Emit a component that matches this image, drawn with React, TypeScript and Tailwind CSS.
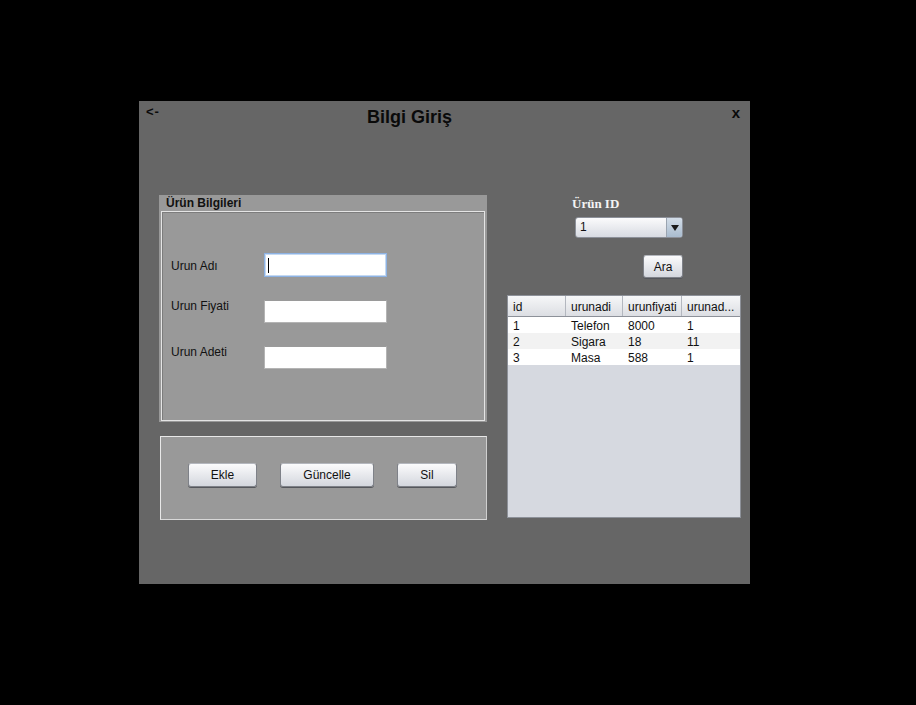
import React from 'react';

const sans = { fontFamily: '"Liberation Sans", Arial, sans-serif' };

function SwingButton({ label, w }: { label: string; w: string }) {
    return (
        <div
            className={`${w} h-[24px] rounded-[3px] border border-[#7e8188] border-t-[#b4b7be] bg-gradient-to-b from-[#fbfbfc] to-[#d4d7de] shadow-[0_1px_0_#55575c] flex items-center justify-center text-[12px] text-[#111]`}
        >
            {label}
        </div>
    );
}

const rows = [
    ['1', 'Telefon', '8000', '1'],
    ['2', 'Sigara', '18', '11'],
    ['3', 'Masa', '588', '1'],
];

export default function App() {
    return (
        <div className="w-[916px] h-[705px] bg-black pt-[101px] pl-[139px]" style={sans}>
            <div className="w-[611px] h-[483px] bg-[#666666] flex flex-col">
                {/* title bar */}
                <div className="h-[94px] flex items-start text-[#0a0a0a]">
                    <div className="w-[228px] pl-[7px] pt-[4px] text-[13px] font-bold leading-[14px] tracking-[1px]">&lt;-</div>
                    <div className="pt-[6px] text-[18px] font-bold leading-[20px]">Bilgi Giriş</div>
                    <div className="ml-auto mr-[10px] pt-[3px] text-[15px] font-bold leading-[17px]">x</div>
                </div>

                {/* body */}
                <div className="flex pl-[20px]">
                    {/* left column */}
                    <div className="w-[328px] flex flex-col">
                        <div className="h-[227px] bg-[#999999] flex flex-col">
                            <div className="h-[16px] pl-[7px] text-[12px] font-bold leading-[14px] pt-px text-[#111]">
                                Ürün Bilgileri
                            </div>
                            <div className="flex-1 mx-[2px] mb-[1px] border border-[#e4e4e4] shadow-[inset_1px_1px_0_#7c7c7c] flex flex-col pt-[41px] pl-[9px] gap-[23px] text-[12px] text-[#111] leading-[14px]">
                                <div className="flex items-start">
                                    <div className="w-[93px] mt-[6px]">Urun Adı</div>
                                    <div className="w-[123px] h-[24px] bg-white border border-[#8db2e3] shadow-[inset_0_0_0_1px_#c5d9f1] flex items-center pl-[3px]">
                                        <div className="w-px h-[15px] bg-black" />
                                    </div>
                                </div>
                                <div className="flex items-start">
                                    <div className="w-[93px] -mt-px">Urun Fiyati</div>
                                    <div className="w-[123px] h-[23px] bg-white border border-[#b4b4b4] border-t-[#9a9a9a]" />
                                </div>
                                <div className="flex items-start">
                                    <div className="w-[93px] -mt-px">Urun Adeti</div>
                                    <div className="w-[123px] h-[23px] bg-white border border-[#b4b4b4] border-t-[#9a9a9a]" />
                                </div>
                            </div>
                        </div>

                        <div className="mt-[14px] ml-px w-[327px] h-[84px] bg-[#999999] border border-[#e8e8e8] border-r-[#cfcfcf] border-b-[#d8d8d8] flex items-start pt-[26px] pl-[27px] gap-[23px]">
                            <SwingButton label="Ekle" w="w-[69px]" />
                            <SwingButton label="Güncelle" w="w-[94px]" />
                            <SwingButton label="Sil" w="w-[60px]" />
                        </div>
                    </div>

                    {/* right column */}
                    <div className="ml-[20px] w-[234px] flex flex-col">
                        <div
                            className="ml-[65px] mt-[1px] text-[13px] font-bold leading-[15px] text-[#f4f4f4]"
                            style={{ fontFamily: '"Liberation Serif", "Times New Roman", serif' }}
                        >
                            Ürün ID
                        </div>

                        <div className="ml-[68px] mt-[6px] w-[108px] h-[21px] rounded-[3px] border border-[#8c9099] bg-gradient-to-b from-[#fbfbfc] to-[#d8dbe2] flex overflow-hidden">
                            <div className="flex-1 pl-[4px] text-[12px] leading-[19px] text-[#111]">1</div>
                            <div className="w-[16px] border-l border-[#9aa4b0] bg-gradient-to-b from-[#d3dde8] to-[#a9bccf] flex items-center justify-center">
                                <svg width="8" height="6" viewBox="0 0 8 6">
                                    <path d="M0 0 L8 0 L4 6 Z" fill="#1a1a1a" />
                                </svg>
                            </div>
                        </div>

                        <div className="ml-[136px] mt-[17px] w-[40px] h-[23px] rounded-[3px] border border-[#7e8188] border-t-[#b4b7be] bg-gradient-to-b from-[#fbfbfc] to-[#d4d7de] shadow-[0_1px_0_#55575c] flex items-center justify-center text-[12px] text-[#111]">
                            Ara
                        </div>

                        <div className="mt-[17px] w-[234px] h-[223px] border border-[#8d9199] bg-[#d6d9e0] flex flex-col text-[12px] text-[#111]">
                            <div className="h-[21px] grid grid-cols-[58px_57px_59px_58px] bg-gradient-to-b from-[#f6f7f8] to-[#dcdee3] border-b border-[#8d9199]">
                                {['id', 'urunadi', 'urunfiyati', 'urunad...'].map((h, i) => (
                                    <div
                                        key={h}
                                        className={`pl-[5px] pt-px leading-[20px] whitespace-nowrap overflow-hidden ${i < 3 ? 'border-r border-[#b3b7bf]' : ''}`}
                                    >
                                        {h}
                                    </div>
                                ))}
                            </div>
                            {rows.map((r, ri) => (
                                <div
                                    key={r[0]}
                                    className={`h-[16px] grid grid-cols-[58px_57px_59px_58px] ${ri === 1 ? 'bg-[#f2f2f2]' : 'bg-white'}`}
                                >
                                    {r.map((c, ci) => (
                                        <div key={ci} className="pl-[5px] pt-[2px] leading-[14px]">
                                            {c}
                                        </div>
                                    ))}
                                </div>
                            ))}
                        </div>
                    </div>
                </div>
            </div>
        </div>
    );
}
